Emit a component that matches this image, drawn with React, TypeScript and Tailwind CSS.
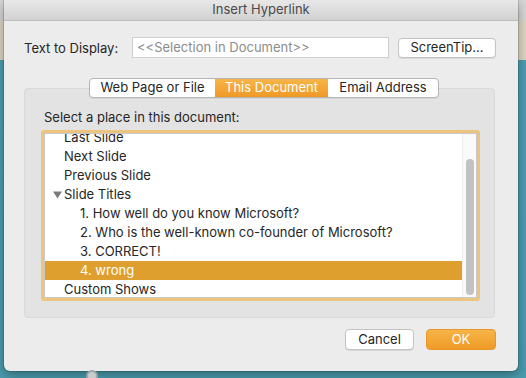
import React from "react";

const rows: { text: string; level: number; selected?: boolean; toggle?: boolean }[] = [
  { text: "Last Slide", level: 1 },
  { text: "Next Slide", level: 1 },
  { text: "Previous Slide", level: 1 },
  { text: "Slide Titles", level: 1, toggle: true },
  { text: "1. How well do you know Microsoft?", level: 2 },
  { text: "2. Who is the well-known co-founder of Microsoft?", level: 2 },
  { text: "3. CORRECT!", level: 2 },
  { text: "4. wrong", level: 2, selected: true },
  { text: "Custom Shows", level: 1 },
];

export default function App() {
  return (
    <div className="relative w-[526px] h-[378px] overflow-hidden bg-[linear-gradient(to_bottom,#d6d6d6_0px,#d6d6d6_20px,#ddd6c4_20px,#ddd6c4_60px,#4b9fb0_60px,#4a9cae_100%)] font-['Inter',Arial,sans-serif] text-[13px] text-[#262626]">
      <div className="pl-[4px]">
        <div className="w-[514px] h-[371px] rounded-b-[6px] bg-[#ececec] shadow-[0_0_0_1px_rgba(0,0,0,0.12),0_4px_12px_rgba(0,0,0,0.35)] flex flex-col">
          {/* title bar */}
          <div className="h-[21px] flex items-center justify-center bg-[linear-gradient(to_bottom,#e8e8e8,#d2d2d2)] border-b border-[#bdbdbd] text-[13px] text-[#4a4a4a]">
            Insert Hyperlink
          </div>

          <div className="px-[20px] flex flex-col">
            {/* row 1 */}
            <div className="mt-[16px] flex items-center h-[21px]">
              <div className="w-[108px] text-[13px] text-[#262626] pt-[3px]">Text to Display:</div>
              <div className="w-[257px] h-[21px] bg-white border border-[#cfcfcf] flex items-center pl-[4px] pt-[1px] text-[#8c8c8c]">
                &lt;&lt;Selection in Document&gt;&gt;
              </div>
              <div className="ml-[9px] w-[98px] h-[20px] bg-white border border-[#c2c2c2] rounded-[4px] shadow-[0_1px_0_rgba(0,0,0,0.08)] flex items-center justify-center text-[#262626]">
                ScreenTip...
              </div>
            </div>

            {/* tabs */}
            <div className="mt-[20px] relative z-10 flex justify-center pl-[6px]">
              <div className="flex h-[20px] rounded-[4px] border border-[#b5b5b5] bg-white overflow-hidden shadow-[0_1px_0_rgba(0,0,0,0.06)]">
                <div className="w-[125px] flex items-center justify-center text-[#262626]">Web Page or File</div>
                <div className="w-[113px] flex items-center justify-center text-white bg-[linear-gradient(to_bottom,#f6b548,#ef9a26)]">This Document</div>
                <div className="w-[110px] flex items-center justify-center text-[#262626]">Email Address</div>
              </div>
            </div>

            {/* group box */}
            <div className="-mt-[10px] w-[471px] h-[230px] rounded-[4px] bg-[#e3e3e3] border border-[#d9d9d9] flex flex-col px-[16px]">
              <div className="mt-[20px] h-[16px] leading-[16px] pl-[3px] text-[#262626]">Select a place in this document:</div>
              <div className="mt-[5px] w-[439px] h-[171px] rounded-[3px] bg-[#edc47e] p-[3px]">
                <div className="w-full h-full border border-[#c9c9c9] bg-white flex overflow-hidden">
                  <div className="flex-1 overflow-hidden">
                    <div className="-mt-[6px]">
                      {rows.map((r) => (
                        <div
                          key={r.text}
                          className={
                            "h-[19px] flex items-center whitespace-nowrap " +
                            (r.selected ? "bg-[#df9f2f] text-white" : "text-[#262626]")
                          }
                        >
                          {r.toggle ? (
                            <div className="w-[19px] pl-[8px] flex items-center">
                              <svg width="9" height="8" viewBox="0 0 9 8">
                                <path d="M0 0.5 L9 0.5 L4.5 7.5 Z" fill="#7a7a7a" />
                              </svg>
                            </div>
                          ) : (
                            <div className={r.level === 2 ? "w-[35px]" : "w-[19px]"} />
                          )}
                          <span>{r.text}</span>
                        </div>
                      ))}
                    </div>
                  </div>
                  <div className="w-[14px] h-full border-l border-[#ececec] bg-[#fafafa] flex flex-col items-center pt-[25px] pb-[2px]">
                    <div className="w-[8px] flex-1 rounded-full bg-[#c2c2c2]" />
                  </div>
                </div>
              </div>
            </div>

            {/* buttons */}
            <div className="mt-[11px] flex justify-end gap-[12px] w-[472px]">
              <div className="w-[69px] h-[21px] bg-white border border-[#c2c2c2] rounded-[4px] shadow-[0_1px_0_rgba(0,0,0,0.08)] flex items-center justify-center text-[#262626]">
                Cancel
              </div>
              <div className="w-[70px] h-[21px] rounded-[4px] bg-[linear-gradient(to_bottom,#f6b548,#ef9a26)] border border-[#e8952a] flex items-center justify-center text-white">
                OK
              </div>
            </div>
          </div>
        </div>
      </div>
      <div className="absolute left-[86px] top-[370px] w-[12px] h-[12px] rounded-full border-2 border-[#9aa4a8] bg-[#c8ccce]" />
    </div>
  );
}
